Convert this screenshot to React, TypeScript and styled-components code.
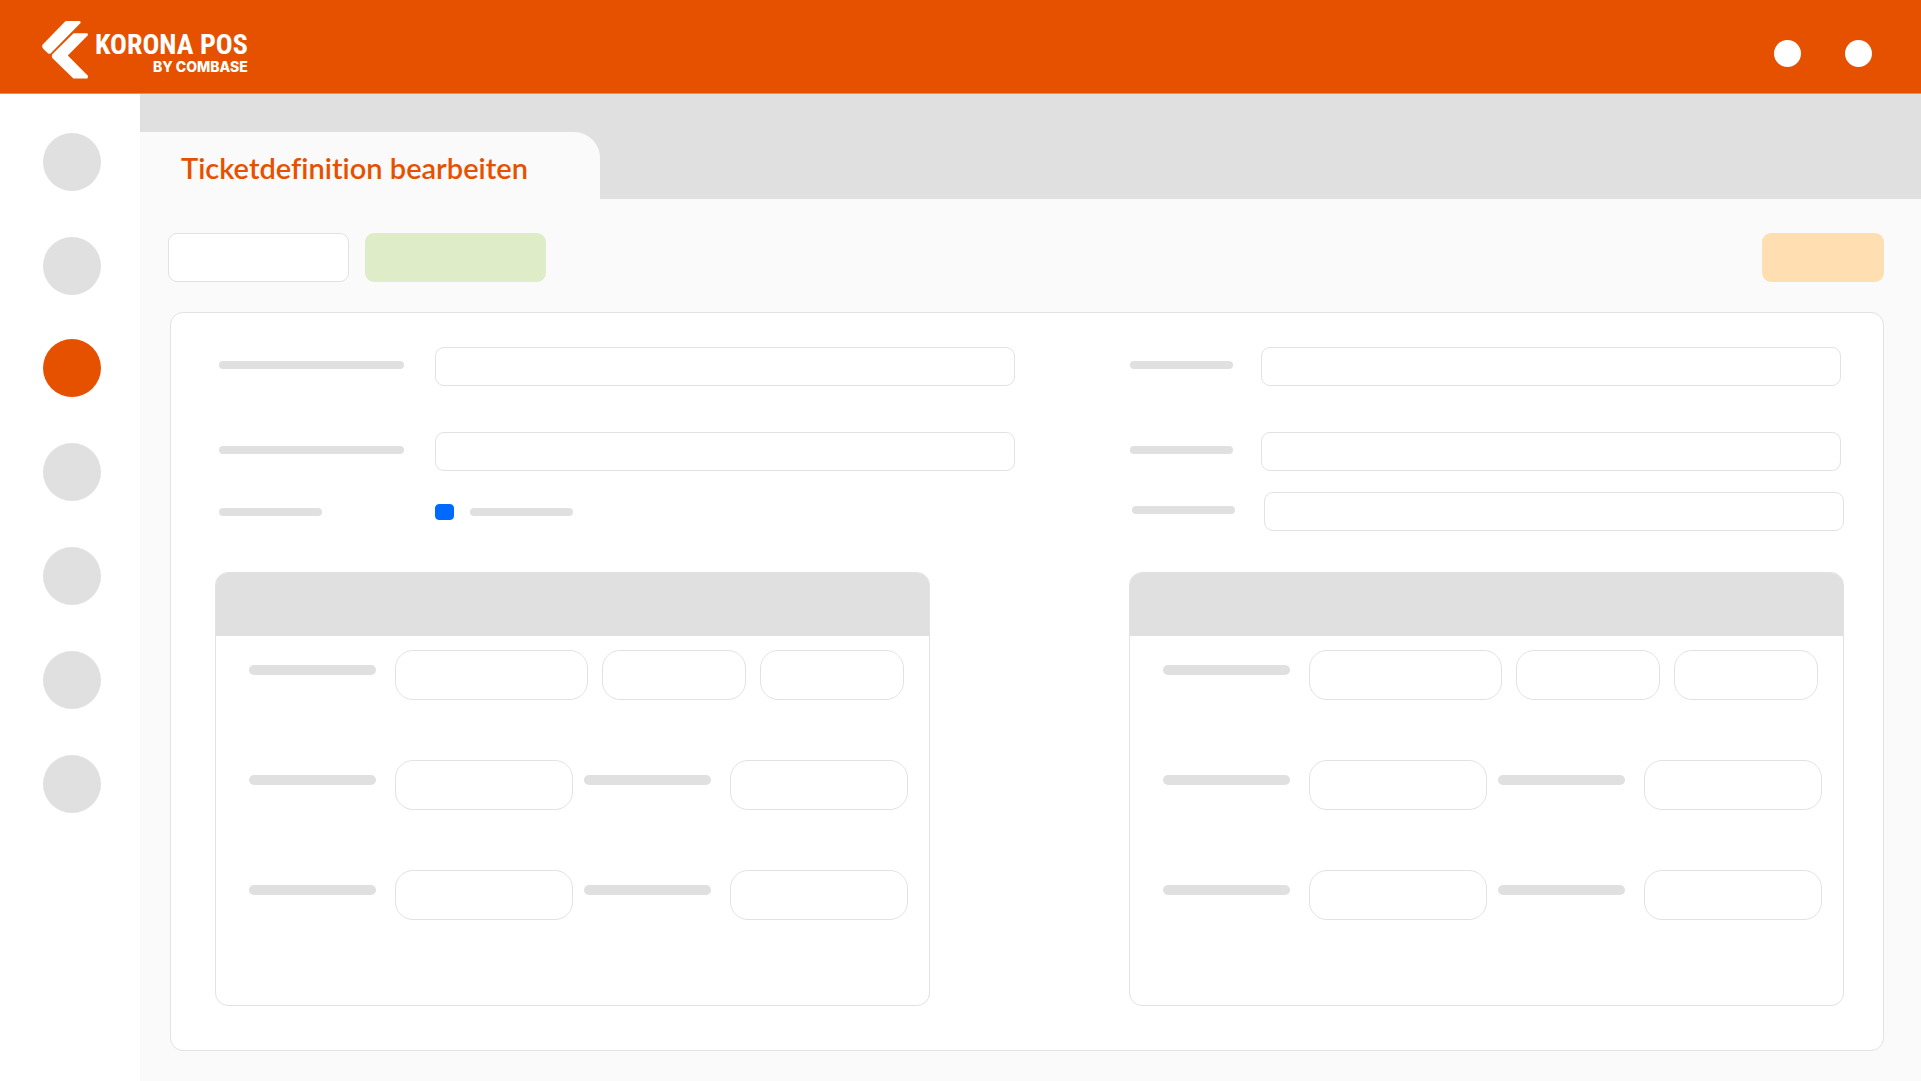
import React, { useId } from "react";
import styled, { createGlobalStyle } from "styled-components";

const color = {
  brand: "#e65100",
  surface: "#ffffff",
  page: "#fafafa",
  placeholder: "#e0e0e0",
  line: "#e2e2e2",
  green: "#deedc8",
  amber: "#ffdfb2",
  blue: "#0069ff",
};

const GlobalStyle = createGlobalStyle`
  *, *::before, *::after { box-sizing: border-box; }
  body {
    margin: 0;
    background: ${color.page};
    font-family: Lato, "Open Sans", sans-serif;
  }
  button, input { font: inherit; margin: 0; padding: 0; }
  button { cursor: pointer; }
`;

const Page = styled.div`
  min-height: 100vh;
  display: flex;
  flex-direction: column;
`;

const Header = styled.header`
  display: flex;
  align-items: flex-start;
  justify-content: space-between;
  height: 94px;
  padding: 20px 49px 0 42px;
  background: ${color.brand};
  border-bottom: 1px solid #ee8c55;
`;

const Brand = styled.a`
  display: flex;
  gap: 6px;
  color: ${color.surface};
  text-decoration: none;
`;

const BrandMark = styled.svg`
  display: block;
  width: 47px;
  height: 60px;
`;

const BrandText = styled.span`
  display: flex;
  flex-direction: column;
  align-items: flex-end;
  padding-top: 10px;
`;

const BrandName = styled.span`
  font: 700 28px/30px "Roboto Condensed", "Liberation Sans Narrow", "Liberation Sans", sans-serif;
  white-space: nowrap;
`;

const BrandBy = styled.span`
  font: 800 14px/14px Inter, "Liberation Sans", sans-serif;
  white-space: nowrap;
`;

const HeaderActions = styled.div`
  display: flex;
  gap: 44px;
  padding-top: 20px;
`;

const RoundButton = styled.button<{ $size: number; $active?: boolean; $light?: boolean }>`
  width: ${(p) => p.$size}px;
  height: ${(p) => p.$size}px;
  border: 0;
  border-radius: 50%;
  background: ${(p) => (p.$light ? color.surface : p.$active ? color.brand : color.placeholder)};
`;

const Body = styled.div`
  flex: 1;
  display: flex;
`;

const Sidebar = styled.nav`
  flex: none;
  width: 140px;
  display: flex;
  flex-direction: column;
  gap: 44px;
  padding: 39px 0 39px 43px;
  background: ${color.surface};
`;

const NavGroup = styled.div`
  display: flex;
  flex-direction: column;
  gap: 46px;
`;

const Main = styled.main`
  flex: 1;
  min-width: 0;
`;

const TabStrip = styled.div`
  display: flex;
  padding-top: 38px;
  background: ${color.placeholder};
`;

const Tab = styled.h1`
  width: 460px;
  margin: 0;
  padding: 18px 24px 13px 41px;
  border-top-right-radius: 26px;
  background: ${color.page};
  color: ${color.brand};
  font-size: 29px;
  font-weight: 600;
  font-variant-ligatures: none;
  line-height: 36px;
  white-space: nowrap;
`;

const Toolbar = styled.div`
  display: flex;
  gap: 16px;
  padding: 34px 37px 30px 28px;
`;

const ToolButton = styled.button<{ $fill: string; $outlined?: boolean; $end?: boolean }>`
  width: ${(p) => (p.$end ? 122 : 181)}px;
  height: 49px;
  margin-left: ${(p) => (p.$end ? "auto" : "0")};
  border: ${(p) => (p.$outlined ? `1px solid ${color.line}` : "0")};
  border-radius: 9px;
  background: ${(p) => p.$fill};
`;

const Card = styled.form`
  margin: 0 37px 30px 30px;
  padding: 34px 39px 44px 44px;
  border: 1px solid ${color.line};
  border-radius: 13px;
  background: ${color.surface};
`;

const Columns = styled.div`
  display: grid;
  grid-template-columns: 800fr 715fr;
  column-gap: 114px;
  margin-bottom: 41px;
`;

const Column = styled.div`
  display: flex;
  flex-direction: column;
`;

const Bar = styled.span<{ $width: number; $thick?: boolean }>`
  display: block;
  flex: none;
  width: ${(p) => p.$width}px;
  height: ${(p) => (p.$thick ? 10 : 8)}px;
  border-radius: 5px;
  background: ${color.placeholder};
`;

const FieldRow = styled.div<{ $label: number; $gap: number; $inset: string }>`
  display: grid;
  grid-template-columns: ${(p) => p.$label}px 1fr;
  margin-bottom: ${(p) => p.$gap}px;
  padding: ${(p) => p.$inset};
`;

const FieldLabel = styled.label`
  padding-top: 14px;
`;

const TextInput = styled.input`
  width: 100%;
  min-width: 0;
  height: 39px;
  padding: 0 12px;
  border: 1px solid ${color.line};
  border-radius: 9px;
  background: ${color.surface};
`;

const CheckRow = styled.div`
  display: grid;
  grid-template-columns: 216px 19px 1fr;
  align-items: center;
  padding-left: 4px;
`;

const CheckLabel = styled.label`
  padding-left: 16px;
`;

const CheckBox = styled.input`
  appearance: none;
  width: 19px;
  height: 16px;
  border: 1px solid ${color.line};
  border-radius: 4px;
  &:checked {
    border-color: ${color.blue};
    background: ${color.blue};
  }
`;

const Groups = styled.div`
  display: grid;
  grid-template-columns: 1fr 1fr;
  column-gap: 199px;
`;

const GroupBox = styled.section`
  border: 1px solid ${color.line};
  border-radius: 13px;
  overflow: hidden;
`;

const GroupHead = styled.header`
  height: 63px;
  background: ${color.placeholder};
`;

const GroupBody = styled.div`
  display: flex;
  flex-direction: column;
  gap: 60px;
  padding: 14px 21px 85px 33px;
`;

const TripleRow = styled.div`
  display: grid;
  grid-template-columns: 338fr 144fr 144fr;
  gap: 14px;
  padding-right: 4px;
`;

const PairRow = styled.div`
  display: grid;
  grid-template-columns: 1fr 1fr;
  gap: 11px;
`;

const PillField = styled.div`
  display: flex;
  gap: 19px;
  min-width: 0;
`;

const PillLabel = styled.label`
  flex: none;
  padding-top: 15px;
`;

const Pill = styled(TextInput)`
  height: 50px;
  border-radius: 18px;
`;

type FieldProps = { name: string; label: number; bar: number; gap: number; inset: string };

function Field({ name, label, bar, gap, inset }: FieldProps) {
  const id = useId();
  return (
    <FieldRow $label={label} $gap={gap} $inset={inset}>
      <FieldLabel htmlFor={id}>
        <Bar $width={bar} />
      </FieldLabel>
      <TextInput id={id} type="text" aria-label={name} />
    </FieldRow>
  );
}

function LabelledPill({ name }: { name: string }) {
  const id = useId();
  return (
    <PillField>
      <PillLabel htmlFor={id}>
        <Bar $width={127} $thick />
      </PillLabel>
      <Pill id={id} type="text" aria-label={name} />
    </PillField>
  );
}

function Group({ name }: { name: string }) {
  return (
    <GroupBox aria-label={name}>
      <GroupHead />
      <GroupBody>
        <TripleRow>
          <LabelledPill name={`${name} Wert`} />
          <Pill type="text" aria-label={`${name} Wert 2`} />
          <Pill type="text" aria-label={`${name} Wert 3`} />
        </TripleRow>
        {["Beginn", "Ende"].map((row) => (
          <PairRow key={row}>
            <LabelledPill name={`${name} ${row} links`} />
            <LabelledPill name={`${name} ${row} rechts`} />
          </PairRow>
        ))}
      </GroupBody>
    </GroupBox>
  );
}

const navGroups = [
  ["Start", "Kasse"],
  ["Tickets", "Artikel", "Kunden", "Berichte", "Einstellungen"],
];

export default function App() {
  const checkId = useId();
  return (
    <Page>
      <GlobalStyle />
      <Header>
        <Brand href="#">
          <BrandMark viewBox="0 0 47 60" fill="currentColor" aria-hidden="true">
            <path d="M23.6 1h14.4l.8 1.8L8.8 33.2q-1.500 1.200-3 0L1 28.400Q-.6 26.400 1 24.200z" />
            <path d="M31.600 13.200H45.400l.7 1.900L25.800 35.400l20.300 20.600-.7 2.600H31.400L10.300 38Q9.200 35.800 10.300 34.200z" />
          </BrandMark>
          <BrandText>
            <BrandName>KORONA POS</BrandName>
            <BrandBy>BY COMBASE</BrandBy>
          </BrandText>
        </Brand>
        <HeaderActions>
          <RoundButton type="button" $size={27} $light aria-label="Hilfe" />
          <RoundButton type="button" $size={27} $light aria-label="Konto" />
        </HeaderActions>
      </Header>
      <Body>
        <Sidebar>
          {navGroups.map((items, i) => (
            <NavGroup key={i}>
              {items.map((item) => (
                <RoundButton
                  key={item}
                  type="button"
                  $size={58}
                  $active={item === "Tickets"}
                  aria-label={item}
                />
              ))}
            </NavGroup>
          ))}
        </Sidebar>
        <Main>
          <TabStrip>
            <Tab>Ticketdefinition bearbeiten</Tab>
          </TabStrip>
          <Toolbar>
            <ToolButton type="button" $fill={color.surface} $outlined aria-label="Zurück" />
            <ToolButton type="button" $fill={color.green} aria-label="Speichern" />
            <ToolButton type="button" $fill={color.amber} $end aria-label="Optionen" />
          </Toolbar>
          <Card>
            <Columns>
              <Column>
                <Field name="Nummer" label={216} bar={185} gap={46} inset="0 0 0 4px" />
                <Field name="Name" label={216} bar={185} gap={33} inset="0 0 0 4px" />
                <CheckRow>
                  <Bar $width={103} />
                  <CheckBox id={checkId} type="checkbox" defaultChecked aria-label="Aktiv" />
                  <CheckLabel htmlFor={checkId}>
                    <Bar $width={103} />
                  </CheckLabel>
                </CheckRow>
              </Column>
              <Column>
                <Field name="Art" label={131} bar={103} gap={46} inset="0 3px 0 1px" />
                <Field name="Gruppe" label={131} bar={103} gap={21} inset="0 3px 0 1px" />
                <Field name="Layout" label={132} bar={103} gap={0} inset="0 0 0 3px" />
              </Column>
            </Columns>
            <Groups>
              <Group name="Verkauf" />
              <Group name="Einlass" />
            </Groups>
          </Card>
        </Main>
      </Body>
    </Page>
  );
}
